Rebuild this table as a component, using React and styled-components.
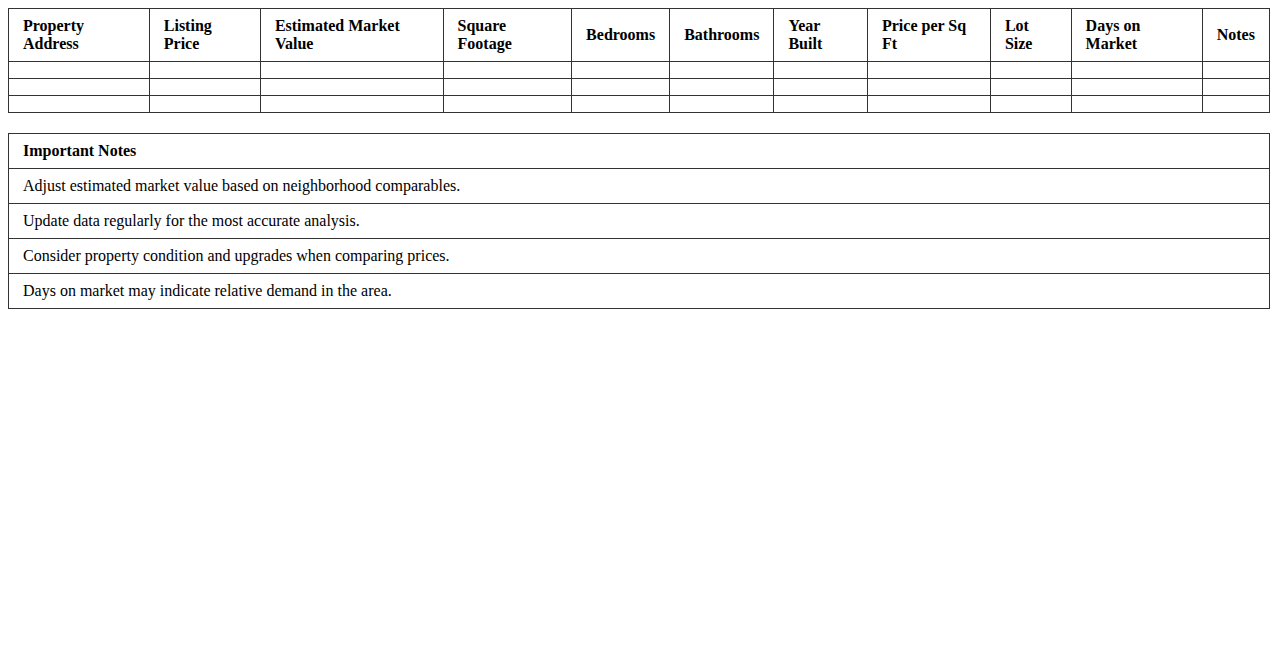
import React from 'react';
import styled, { createGlobalStyle } from 'styled-components';

const headers = [
  'Property Address',
  'Listing Price',
  'Estimated Market Value',
  'Square Footage',
  'Bedrooms',
  'Bathrooms',
  'Year Built',
  'Price per Sq Ft',
  'Lot Size',
  'Days on Market',
  'Notes',
];

const notes = [
  'Adjust estimated market value based on neighborhood comparables.',
  'Update data regularly for the most accurate analysis.',
  'Consider property condition and upgrades when comparing prices.',
  'Days on market may indicate relative demand in the area.',
];

const GlobalStyle = createGlobalStyle`
  body {
    margin: 8px;
    font-family: 'Liberation Serif', 'Times New Roman', serif;
    font-size: 16px;
    color: #000;
    background: #fff;
  }
`;

const Table = styled.table`
  width: 100%;
  border-collapse: collapse;
  margin-bottom: ${(p) => p.$gap || 0}px;
`;

const Th = styled.th`
  border: 1px solid #333;
  padding: 8px 14px;
  text-align: left;
  font-weight: bold;
`;

const Td = styled.td`
  border: 1px solid #333;
  padding: 8px 14px;
  text-align: left;
`;

const App = () => {
  return (
    <>
      <GlobalStyle />
      <Table $gap={20}>
        <thead>
          <tr>
            {headers.map((h) => (
              <Th key={h}>{h}</Th>
            ))}
          </tr>
        </thead>
        <tbody>
          {[0, 1, 2].map((r) => (
            <tr key={r}>
              {headers.map((h) => (
                <Td key={h}></Td>
              ))}
            </tr>
          ))}
        </tbody>
      </Table>
      <Table>
        <thead>
          <tr>
            <Th>Important Notes</Th>
          </tr>
        </thead>
        <tbody>
          {notes.map((n) => (
            <tr key={n}>
              <Td>{n}</Td>
            </tr>
          ))}
        </tbody>
      </Table>
    </>
  );
};

export default App;
